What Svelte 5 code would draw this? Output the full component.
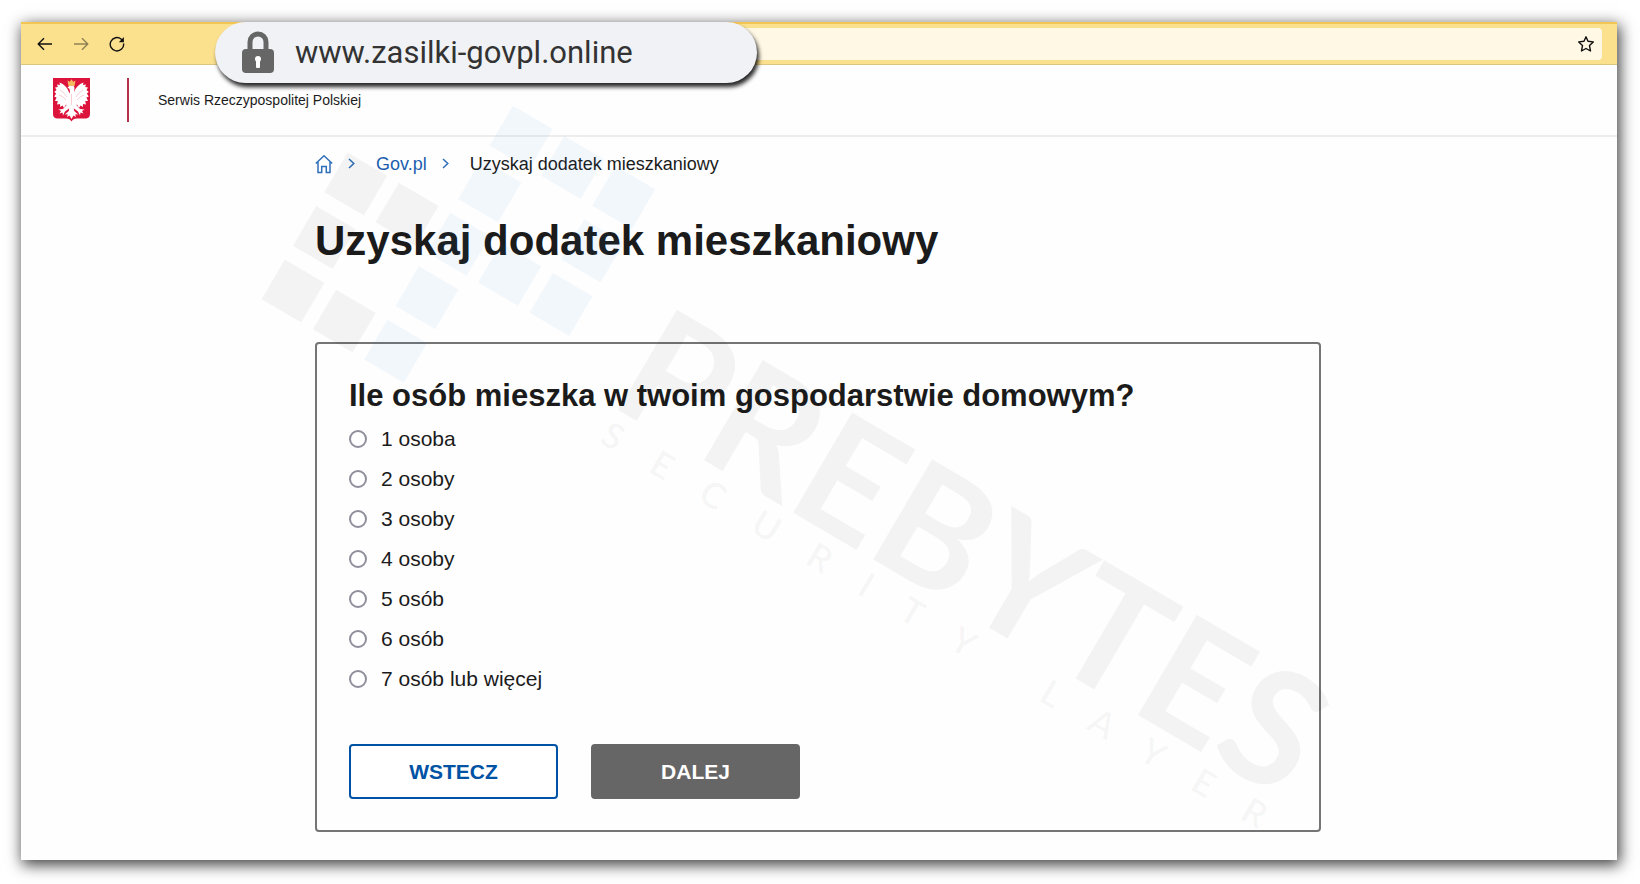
<script>
  const options = [
    '1 osoba',
    '2 osoby',
    '3 osoby',
    '4 osoby',
    '5 osób',
    '6 osób',
    '7 osób lub więcej'
  ];
  let selected = $state('');

  // Logo tiles as [column, row, tone] on a tilted grid
  const tiles = [
    [0, 0, 'grey'], [1, 0, 'grey'], [0, 1, 'grey'], [0, 2, 'grey'], [1, 2, 'grey'],
    [2, 0, 'blue'], [2, 1, 'blue'], [2, 2, 'blue'], [2, 3, 'blue'], [2, 4, 'blue'],
    [3, 4, 'blue'], [4, 4, 'blue'], [4, 3, 'blue'], [4, 2, 'blue'], [3, 2, 'blue']
  ];
</script>

<div class="stage">
  <div class="window">
    <div class="toolbar">
      <button class="nav" aria-label="Wstecz w przeglądarce">
        <svg width="16" height="16" viewBox="0 0 16 16"><path d="M15 8H1.5M7 2.2 1.2 8 7 13.8" /></svg>
      </button>
      <button class="nav dim" aria-label="Dalej w przeglądarce">
        <svg width="16" height="16" viewBox="0 0 16 16"><path d="M1 8h13.500M9 2.200 14.800 8 9 13.800" /></svg>
      </button>
      <button class="nav" aria-label="Odśwież">
        <svg width="16" height="16" viewBox="0 0 16 16"><path d="M14.600 7.500A6.700 6.700 0 1 1 12.300 3.200L14 5" /><path class="solid" d="M14.900 1v5.200H9.800z" /></svg>
      </button>
      <div class="field">
        <button class="star" aria-label="Dodaj do ulubionych">
          <svg width="18" height="18" viewBox="0 0 18 18"><path d="M9 1.800 11 6.300 16.300 6.900 12.500 10.600 13.500 16 9 13.500 4.500 16 5.500 10.600 1.700 6.900 7 6.300z" /></svg>
        </button>
      </div>
      <div class="address">
        <svg class="lock" width="34" height="44" viewBox="0 0 34 44">
          <path d="M9 22V11a8 8 0 0 1 16 0v11" fill="none" stroke="#666" stroke-width="5" />
          <rect x="1" y="18" width="32" height="24" rx="4" fill="#666" />
          <circle cx="17" cy="28" r="3" fill="#fff" />
          <rect x="15" y="28" width="4" height="9" rx="1" fill="#fff" />
        </svg>
        <span>www.zasilki-govpl.online</span>
      </div>
    </div>

    <header>
      <svg class="crest" width="37" height="44" viewBox="0 0 37 44">
        <path d="M0 0h37v36q0 4-4 4.500h-9q-4 0-5.500 3-1.500-3-5.500-3H4q-4-.5-4-4.500z" fill="#dc143c" />
        <g fill="#fff">
          <path d="M16.200 15C15 10 11 6 6.500 4.500L7 7 4 6.500 4.800 9 2 9.500 3.500 12 1.200 14 3.200 15.500 1.200 18.500 3.600 19.500 2 23 4.800 23 4 26.500 7 26 7.200 29 9.500 27.500 11 30 13 26.500 14.500 28 16 24z" />
          <path d="M20.800 15C22 10 26 6 30.500 4.500L30 7 33 6.500 32.200 9 35 9.500 33.500 12 35.800 14 33.800 15.500 35.800 18.500 33.400 19.500 35 23 32.200 23 33 26.500 30 26 29.800 29 27.500 27.500 26 30 24 26.500 22.500 28 21 24z" />
          <path d="M14.500 9.500 17 7.500Q21 6.500 21.500 10l-.5 4 2 5-1 7-2 4h-3l-2-4-1-7 3-5-.5-3z" />
          <path d="M15.500 25 10 31l-4.500.5 2.500 1.500-1.500 2.500 3-1 .5 3 2-4L18 29z" />
          <path d="M21.500 25 27 31l4.500.5L29 33l1.500 2.500-3-1-.5 3-2-4L19 29z" />
          <path d="M16.500 28h4l.7 5 4 3.500-3-.2.800 2.700-2.500-1.500-2 3.500-2-3.500-2.500 1.500.8-2.700-3 .2 4-3.500z" />
        </g>
        <path d="M7 12q4 2 7 7M6 17q4 1 7 5M30 12q-4 2-7 7M31 17q-4 1-7 5M18.500 16v11" fill="none" stroke="#f3b8c4" stroke-width=".7" />
        <path d="M14.500 2.500l2.300 1.200L18.500 1.300l1.700 2.400 2.300-1.200L21.500 8h-6z" fill="#f4b860" />
      </svg>
      <span class="rule"></span>
      <span>Serwis Rzeczypospolitej Polskiej</span>
    </header>

    <main>
      <nav class="crumbs" aria-label="Okruszki">
        <a href="#home" aria-label="Strona główna">
          <svg width="18" height="19" viewBox="0 0 18 19"><path d="M.8 8.500 9 .8l8.200 7.700M3 7v10.500h3.700v-6h4.600v6H15V7" /></svg>
        </a>
        <svg class="chevron" width="7" height="12" viewBox="0 0 7 12"><path d="M1 1l4.800 4.500L1 10" /></svg>
        <a href="#gov">Gov.pl</a>
        <svg class="chevron" width="7" height="12" viewBox="0 0 7 12"><path d="M1 1l4.800 4.500L1 10" /></svg>
        <span>Uzyskaj dodatek mieszkaniowy</span>
      </nav>

      <h1>Uzyskaj dodatek mieszkaniowy</h1>

      <form class="card" onsubmit={(e) => e.preventDefault()}>
        <h2 id="question">Ile osób mieszka w twoim gospodarstwie domowym?</h2>
        <div class="options" role="radiogroup" aria-labelledby="question">
          {#each options as option}
            <label>
              <input type="radio" name="people" value={option} bind:group={selected} />
              {option}
            </label>
          {/each}
        </div>
        <div class="actions">
          <button type="button" class="back">WSTECZ</button>
          <button type="submit" class="next">DALEJ</button>
        </div>
      </form>
    </main>

    <svg class="watermark" viewBox="21 22 1596 838" aria-hidden="true">
      <g transform="translate(293 291) rotate(30.400)">
        {#each tiles as [col, row, tone]}
          <rect class={tone} x={col * 59.5 - 23} y={row * -62 - 23} width="46" height="46" />
        {/each}
      </g>
      <g transform="translate(618 410) rotate(30.400)">
        <text class="brand" x="-13" y="0">PREBYTES</text>
        <text class="tagline" x="-1" y="38">SECURITY LAYER</text>
      </g>
    </svg>
  </div>
</div>

<style>
  :global(body) {
    margin: 0;
    background: #fff;
  }
  .stage {
    padding: 22px 23px 24px 21px;
    font-family: 'Liberation Sans', Arial, sans-serif;
    color: #1b1b1b;
  }
  .window {
    position: relative;
    background: #fefefe;
    box-shadow: 2px 4px 14px 1px rgba(0, 0, 0, 0.75);
  }
  .toolbar {
    position: relative;
    display: flex;
    align-items: center;
    gap: 20px;
    box-sizing: border-box;
    height: 43px;
    padding: 4px 15px 4px 16px;
    background: #fbe08e;
    border-top: 2px solid #f3c552;
    border-bottom: 1px solid #dcc67c;
  }
  button {
    font-family: inherit;
    cursor: pointer;
  }
  .nav,
  .star {
    display: flex;
    padding: 0;
    border: 0;
    background: none;
  }
  .nav svg,
  .star svg {
    fill: none;
    stroke: #111;
    stroke-width: 1.4;
    stroke-linejoin: round;
  }
  .nav .solid {
    fill: #111;
    stroke: none;
  }
  .dim {
    opacity: 0.45;
  }
  .field {
    display: flex;
    flex: 1;
    align-items: center;
    justify-content: flex-end;
    box-sizing: border-box;
    height: 32px;
    margin-left: 100px;
    padding-right: 7px;
    border-radius: 4px;
    background: #fff8e4;
  }
  .address {
    position: absolute;
    top: -2px;
    left: 194px;
    display: flex;
    align-items: center;
    gap: 20px;
    box-sizing: border-box;
    width: 542px;
    height: 61px;
    padding-left: 26px;
    border-radius: 31px;
    background: #f0f2f5;
    box-shadow: 2px 4px 4px rgba(0, 0, 0, 0.85);
    color: #333;
    font: 400 31px/40px Roboto, sans-serif;
  }
  header {
    display: flex;
    align-items: center;
    height: 70px;
    padding-left: 32px;
    border-bottom: 2px solid #ededed;
    font-size: 14px;
  }
  .rule {
    width: 2px;
    height: 44px;
    margin: 0 29px 0 37px;
    background: #b5304a;
  }
  main {
    max-width: 1006px;
    margin: 0 auto;
    padding: 14px 26px 28px 24px;
  }
  .crumbs {
    display: flex;
    align-items: center;
    height: 26px;
    font-size: 18px;
  }
  .crumbs a {
    display: flex;
    color: #1d5fae;
    text-decoration: none;
  }
  .crumbs svg {
    fill: none;
    stroke: #2f6fb8;
    stroke-width: 1.5;
  }
  .chevron {
    margin: 0 21px 0 15px;
  }
  h1 {
    margin: 40px 0 77px;
    font-size: 42px;
    line-height: 48px;
  }
  .card {
    box-sizing: border-box;
    padding: 33px 32px 31px;
    border: 2px solid #757575;
    border-radius: 4px;
  }
  h2 {
    margin: 0 0 4px;
    font-size: 31px;
    line-height: 38px;
  }
  label {
    display: flex;
    align-items: center;
    gap: 14px;
    height: 40px;
    font-size: 21px;
  }
  input {
    appearance: none;
    box-sizing: border-box;
    width: 18px;
    height: 18px;
    margin: 0;
    border: 2px solid #8f8f9d;
    border-radius: 50%;
    background: #fff;
  }
  input:checked {
    background: #0052a5;
    box-shadow: inset 0 0 0 3px #fff;
  }
  .actions {
    display: flex;
    flex-wrap: wrap;
    gap: 33px;
    margin-top: 45px;
  }
  .actions button {
    width: 209px;
    height: 55px;
    border: 2px solid #0052a5;
    border-radius: 4px;
    background: #fff;
    color: #0052a5;
    font-size: 21px;
    font-weight: 700;
  }
  .actions .next {
    border-color: #666;
    background: #666;
    color: #fff;
  }
  .watermark {
    position: absolute;
    inset: 0;
    width: 100%;
    height: 100%;
    pointer-events: none;
  }
  .grey,
  .brand {
    fill: rgba(0, 0, 0, 0.045);
  }
  .blue {
    fill: rgba(30, 130, 210, 0.055);
  }
  .brand {
    font: 700 161px Lato, sans-serif;
    font-kerning: none;
  }
  .tagline {
    fill: rgba(0, 0, 0, 0.03);
    font: 700 36px Lato, sans-serif;
    letter-spacing: 37px;
  }
</style>
